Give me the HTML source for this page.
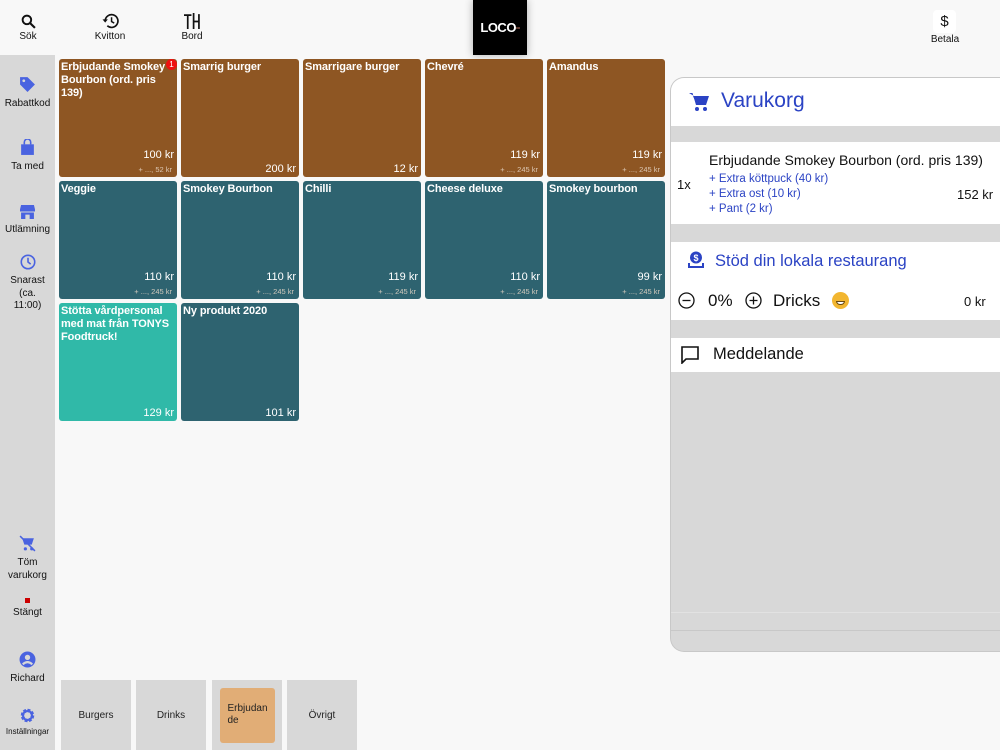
<!DOCTYPE html>
<html><head><meta charset="utf-8"><style>
*{margin:0;padding:0;box-sizing:border-box}
body{width:1000px;height:750px;background:#f8f8f8;font-family:"Liberation Sans",sans-serif;position:relative;overflow:hidden;color:#111}
.abs{position:absolute}
.top{font-size:10px;text-align:center;color:#111}
.top svg{display:block;margin:0 auto 2px}
.side{position:absolute;left:0;top:55px;width:55px;height:695px;background:#d8d8d8}
.si{position:absolute;left:0;width:55px;text-align:center;font-size:10px;color:#111;line-height:12.5px}
.si svg{display:block;margin:0 auto 5px}
.t{position:absolute;width:118px;height:118px;border-radius:3px;color:#fff}
.t .n{position:absolute;left:2px;top:2px;right:0;font-weight:bold;font-size:11px;line-height:13px;letter-spacing:-0.1px}
.t .p{position:absolute;right:3px;font-size:11px}
.t .s{position:absolute;right:5px;bottom:3px;font-size:7.5px;color:#e8d8c8;opacity:.85}
.br{background:#8e5623}.tl{background:#2e6370}.lt{background:#30b9a8}
.tab{position:absolute;top:680px;width:70px;height:70px;background:#d8d8d8;font-size:10px;display:flex;align-items:center;justify-content:center;color:#222}
.cart{position:absolute;left:670px;top:77px;width:330px;height:575px;background:#d8d8d8;border:1px solid #c8c8c8;border-right:none;border-radius:14px 0 0 14px;overflow:hidden}
.w{position:absolute;left:0;right:0;background:#fff}
.blue{color:#2b43c4}
</style></head><body>
<!-- top bar -->
<div class="abs top" style="left:10px;top:14px;width:36px">
<svg width="15" height="15" viewBox="0 0 14 14"><circle cx="5.5" cy="5.5" r="4" fill="none" stroke="#111" stroke-width="1.8"/><path d="M8.5 8.5L13 13" stroke="#111" stroke-width="2"/></svg>Sök</div>
<div class="abs top" style="left:88px;top:13px;width:44px">
<svg width="17" height="16" viewBox="0 0 16 15"><path d="M3 7.5A6 6 0 1 1 5 12" fill="none" stroke="#111" stroke-width="1.6"/><path d="M0.5 6L3 9L5.5 6" fill="#111"/><path d="M9 4V8L11.5 9.5" fill="none" stroke="#111" stroke-width="1.4"/></svg>Kvitton</div>
<div class="abs top" style="left:174px;top:13px;width:36px">
<svg width="16" height="16" viewBox="0 0 15 15"><path d="M0 2H7M3.5 2V15M9 0V15M14 1V15M9 8H14" stroke="#111" stroke-width="1.6" fill="none"/></svg>Bord</div>
<div class="abs" style="left:473px;top:0;width:54px;height:55px;background:#000;box-shadow:0 0 8px rgba(0,0,0,.3);color:#fff;font-weight:bold;font-size:13px;display:flex;align-items:center;justify-content:center;letter-spacing:-0.5px">LOCO<span style="font-size:4px;color:#a65">co</span></div>
<div class="abs" style="left:933px;top:10px;width:23px;height:23px;background:#fff;border-radius:4px;text-align:center;font-size:15px;line-height:23px">$</div>
<div class="abs top" style="left:925px;top:34px;width:40px;font-size:10px">Betala</div>

<!-- sidebar -->
<div class="side"></div>
<div class="si" style="top:76px"><svg width="17" height="17" viewBox="0 0 16 16"><path d="M1 1H8L15 8L8 15L1 8Z" fill="#4a63e0"/><circle cx="4.5" cy="4.5" r="1.3" fill="#d8d8d8"/></svg>Rabattkod</div>
<div class="si" style="top:139px"><svg width="15" height="17" viewBox="0 0 14 16"><path d="M1 5H13V15H1Z" fill="#4a63e0"/><path d="M4 5V3A3 3 0 0 1 10 3V5" stroke="#4a63e0" stroke-width="1.5" fill="none"/></svg>Ta med</div>
<div class="si" style="top:205px"><svg width="15" height="14" viewBox="0 0 14 13"><path d="M1 0H13L14 4V6H0V4Z" fill="#4a63e0"/><path d="M1 7H13V13H9V9H5V13H1Z" fill="#4a63e0"/></svg>Utlämning</div>
<div class="si" style="top:254px"><svg width="16" height="16" viewBox="0 0 15 15"><circle cx="7.5" cy="7.5" r="6.3" fill="none" stroke="#4a63e0" stroke-width="1.5"/><path d="M7.5 3.5V7.5L10 9.5" stroke="#4a63e0" stroke-width="1.5" fill="none"/></svg>Snarast<br>(ca.<br>11:00)</div>
<div class="si" style="top:535px"><svg width="17" height="17" viewBox="0 0 16 16"><path d="M3 3H14L12 9H5Z" fill="#4a63e0"/><circle cx="6" cy="13" r="1.5" fill="#4a63e0"/><circle cx="12" cy="13" r="1.5" fill="#4a63e0"/><path d="M1 1L15 15" stroke="#4a63e0" stroke-width="1.4"/></svg>Töm<br>varukorg</div>
<div class="abs" style="left:25px;top:598px;width:5px;height:5px;background:#c00"></div>
<div class="si" style="top:607px">Stängt</div>
<div class="si" style="top:651px"><svg width="17" height="17" viewBox="0 0 16 16"><circle cx="8" cy="8" r="7.5" fill="#4a63e0"/><circle cx="8" cy="6" r="2.5" fill="#d8d8d8"/><path d="M3.5 12.5Q8 8.5 12.5 12.5" stroke="#d8d8d8" stroke-width="2" fill="none"/></svg>Richard</div>
<div class="si" style="top:708px;font-size:8px"><svg width="15" height="15" viewBox="0 0 15 15" style="margin-bottom:3px"><circle cx="7.5" cy="7.5" r="5" fill="none" stroke="#4a63e0" stroke-width="3.5" stroke-dasharray="2.6 1.3"/><circle cx="7.5" cy="7.5" r="4.5" fill="none" stroke="#4a63e0" stroke-width="2"/></svg>Inställningar</div>

<!-- tiles row 1 -->
<div class="t br" style="left:59px;top:59px"><div class="n">Erbjudande Smokey Bourbon (ord. pris 139)</div><div class="p" style="top:90px">100 kr</div><div class="s">+ ..., 52 kr</div></div>
<div class="abs" style="left:166px;top:59px;width:11px;height:11px;border-radius:50%;background:#e11;color:#fff;font-size:8px;text-align:center;line-height:11px">1</div>
<div class="t br" style="left:181px;top:59px"><div class="n">Smarrig burger</div><div class="p" style="bottom:2px">200 kr</div></div>
<div class="t br" style="left:303px;top:59px"><div class="n">Smarrigare burger</div><div class="p" style="bottom:2px">12 kr</div></div>
<div class="t br" style="left:425px;top:59px"><div class="n">Chevré</div><div class="p" style="top:90px">119 kr</div><div class="s">+ ..., 245 kr</div></div>
<div class="t br" style="left:547px;top:59px"><div class="n">Amandus</div><div class="p" style="top:90px">119 kr</div><div class="s">+ ..., 245 kr</div></div>
<!-- row 2 -->
<div class="t tl" style="left:59px;top:181px"><div class="n">Veggie</div><div class="p" style="top:90px">110 kr</div><div class="s">+ ..., 245 kr</div></div>
<div class="t tl" style="left:181px;top:181px"><div class="n">Smokey Bourbon</div><div class="p" style="top:90px">110 kr</div><div class="s">+ ..., 245 kr</div></div>
<div class="t tl" style="left:303px;top:181px"><div class="n">Chilli</div><div class="p" style="top:90px">119 kr</div><div class="s">+ ..., 245 kr</div></div>
<div class="t tl" style="left:425px;top:181px"><div class="n">Cheese deluxe</div><div class="p" style="top:90px">110 kr</div><div class="s">+ ..., 245 kr</div></div>
<div class="t tl" style="left:547px;top:181px"><div class="n">Smokey bourbon</div><div class="p" style="top:90px">99 kr</div><div class="s">+ ..., 245 kr</div></div>
<!-- row 3 -->
<div class="t lt" style="left:59px;top:303px"><div class="n">Stötta vårdpersonal med mat från TONYS Foodtruck!</div><div class="p" style="bottom:2px">129 kr</div></div>
<div class="t tl" style="left:181px;top:303px"><div class="n">Ny produkt 2020</div><div class="p" style="bottom:2px">101 kr</div></div>

<!-- tabs -->
<div class="tab" style="left:61px">Burgers</div>
<div class="tab" style="left:136px">Drinks</div>
<div class="tab" style="left:212px"><div style="width:55px;height:55px;background:#e1ad76;border-radius:3px;padding:15px 0 0 8px;line-height:12px;font-size:10px">Erbjudan<br>de</div></div>
<div class="tab" style="left:287px">Övrigt</div>

<!-- cart -->
<div class="cart">
 <div class="w" style="top:0;height:48px">
  <svg class="abs" style="left:18px;top:14px" width="20" height="20" viewBox="0 0 20 20"><path d="M0 1H3.5L7 13H17L20 4H5" fill="#2b43c4"/><path d="M4 4H19L16.5 11H7Z" fill="#2b43c4"/><circle cx="8" cy="17" r="2" fill="#2b43c4"/><circle cx="16" cy="17" r="2" fill="#2b43c4"/></svg>
  <div class="abs blue" style="left:50px;top:11px;font-size:21px">Varukorg</div>
 </div>
 <div class="w" style="top:64px;height:82px">
  <div class="abs" style="left:38px;top:10px;font-size:14px">Erbjudande Smokey Bourbon (ord. pris 139)</div>
  <div class="abs" style="left:6px;top:35px;font-size:13px">1x</div>
  <div class="abs blue" style="left:38px;top:30px;font-size:11.5px;line-height:15px">+ Extra köttpuck (40 kr)<br>+ Extra ost (10 kr)<br>+ Pant (2 kr)</div>
  <div class="abs" style="left:286px;top:45px;font-size:13px">152 kr</div>
 </div>
 <div class="w" style="top:164px;height:78px">
  <svg class="abs" style="left:16px;top:9px" width="18" height="18" viewBox="0 0 18 18"><circle cx="9" cy="6.5" r="6" fill="#2b43c4"/><text x="9" y="10" font-size="9" fill="#fff" text-anchor="middle" font-family="Liberation Sans" font-weight="bold">$</text><path d="M1 12V17H17V12H15V15H3V12Z" fill="#2b43c4"/></svg>
  <div class="abs blue" style="left:44px;top:10px;font-size:16.5px">Stöd din lokala restaurang</div>
  <svg class="abs" style="left:7px;top:50px" width="17" height="17" viewBox="0 0 17 17"><circle cx="8.5" cy="8.5" r="7.5" fill="none" stroke="#111" stroke-width="1.3"/><path d="M4.5 8.5H12.5" stroke="#111" stroke-width="1.3"/></svg>
  <div class="abs" style="left:37px;top:49px;font-size:17px">0%</div>
  <svg class="abs" style="left:74px;top:50px" width="17" height="17" viewBox="0 0 17 17"><circle cx="8.5" cy="8.5" r="7.5" fill="none" stroke="#111" stroke-width="1.3"/><path d="M4.5 8.5H12.5M8.5 4.5V12.5" stroke="#111" stroke-width="1.3"/></svg>
  <div class="abs" style="left:102px;top:49px;font-size:17px">Dricks</div>
  <div class="abs" style="left:161px;top:50px;width:17px;height:17px;border-radius:50%;background:#f2b630"><div style="position:absolute;left:4px;top:9px;width:9px;height:4px;background:#fff;border:1px solid #6a4a10;border-radius:0 0 4px 4px"></div></div>
  <div class="abs" style="left:293px;top:52px;font-size:13px">0 kr</div>
 </div>
 <div class="w" style="top:260px;height:34px">
  <svg class="abs" style="left:10px;top:8px" width="18" height="18" viewBox="0 0 18 18"><path d="M1 1H17V13H5L1 17Z" fill="none" stroke="#111" stroke-width="1.6"/></svg>
  <div class="abs" style="left:42px;top:7px;font-size:16.5px">Meddelande</div>
 </div>
 <div class="abs" style="left:0;right:0;top:534px;height:1px;background:#e2e2e2"></div>
 <div class="abs" style="left:0;right:0;top:552px;height:1px;background:#c8c8c8"></div>
</div>
</body></html>
